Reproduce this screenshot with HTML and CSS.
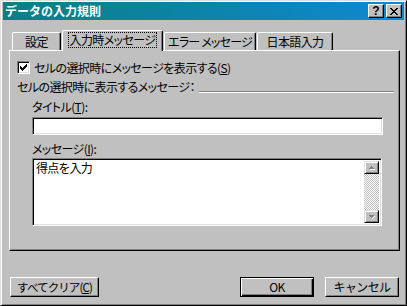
FILE: index.html
```html
<!DOCTYPE html>
<html lang="ja">
<head>
    <meta charset="UTF-8">
    <title>データの入力規則</title>
    <link rel="stylesheet" href="styles.css">
</head>
<body>
    <div class="window">
        <div class="titlebar">
            <span class="title">データの入力規則</span>
            <div class="title-buttons">
                <span class="tbtn help">?</span>
                <span class="tbtn close">
                    <svg width="8" height="7" viewBox="0 0 8 7"><path d="M0 0h2v1h1v1h2v-1h1v-1h2v1h-1v1h-1v1h-1v1h1v1h1v1h1v1h-2v-1h-1v-1h-2v1h-1v1h-2v-1h1v-1h1v-1h1v-1h-1v-1h-1v-1h-1z" fill="#000"/></svg>
                </span>
            </div>
        </div>

        <div class="content">
            <div class="tabs">
                <div class="tab tab-1">設定</div>
                <div class="tab tab-2 selected"><span class="focus">入力時メッセージ</span></div>
                <div class="tab tab-3">エラー&nbsp;メッセージ</div>
                <div class="tab tab-4">日本語入力</div>
            </div>

            <div class="panel">
                <div class="check-row">
                    <span class="checkbox">
                        <svg width="7" height="7" viewBox="0 0 7 7"><path d="M0 2h1v1h1v1h1v-1h1v-1h1v-1h1v-1h1v3h-1v1h-1v1h-1v1h-1v1h-1v-1h-1v-1h-1z" fill="#000"/></svg>
                    </span>
                    <span>セルの選択時にメッセージを表示する(<u>S</u>)</span>
                </div>

                <div class="group-head">
                    <span>セルの選択時に表示するメッセージ：</span>
                    <span class="etch"></span>
                </div>

                <div class="group-body">
                    <div class="label label-title">タイトル(<u>T</u>):</div>
                    <div class="field"></div>

                    <div class="label label-msg">メッセージ(<u>I</u>):</div>
                    <div class="memo">
                        <div class="memo-text">得点を入力</div>
                        <div class="scrollbar">
                            <span class="sbtn">
                                <svg width="6" height="4" viewBox="0 0 6 4"><path d="M2 0h1v1h1v1h1v1h-5v-1h1v-1h1z" fill="#808080"/><path d="M1 3h5v1h-5z" fill="#fff"/></svg>
                            </span>
                            <span class="track"></span>
                            <span class="sbtn">
                                <svg width="6" height="4" viewBox="0 0 6 4"><path d="M0 0h5v1h-1v1h-1v1h-1v-1h-1v-1h-1z" fill="#808080"/><path d="M5 1h1v1h-1zM4 2h1v1h-1zM3 3h1v1h-1z" fill="#fff"/></svg>
                            </span>
                        </div>
                    </div>
                </div>
            </div>

            <div class="buttons">
                <button class="btn btn-clear">すべてクリア(<u>C</u>)</button>
                <span class="spacer"></span>
                <button class="btn btn-ok">OK</button>
                <button class="btn btn-cancel">キャンセル</button>
            </div>
        </div>
    </div>
</body>
</html>
```

FILE: styles.css
```css
body {
    margin: 0;
    padding: 0;
    background-color: #c0c0c0;
    font-family: "Noto Sans CJK JP", "Noto Sans", sans-serif;
    font-size: 12px;
    font-feature-settings: "palt";
    letter-spacing: -0.6px;
    color: #000;
    white-space: nowrap;
}

u {
    text-decoration: underline;
    text-underline-offset: 1px;
}

.window {
    width: 407px;
    height: 306px;
    box-sizing: border-box;
    padding: 1px 2px;
    background-color: #c0c0c0;
    border: 1px solid;
    border-color: #dfdfdf #000 #000 #dfdfdf;
    box-shadow: inset 1px 1px #fff, inset -1px -1px #808080;
}

.titlebar {
    height: 18px;
    display: flex;
    align-items: center;
    justify-content: space-between;
    padding-left: 2px;
    background: linear-gradient(to right, #0a7f84, #1088d0);
}

.title {
    color: #fff;
    font-weight: bold;
    font-size: 12px;
    line-height: 18px;
    letter-spacing: 0;
    font-feature-settings: normal;
}

.title-buttons {
    display: flex;
    gap: 2px;
    margin-right: 2px;
}

.tbtn {
    width: 16px;
    height: 14px;
    box-sizing: border-box;
    display: flex;
    align-items: center;
    justify-content: center;
    background-color: #c0c0c0;
    border: 1px solid;
    border-color: #fff #000 #000 #fff;
    box-shadow: inset -1px -1px #808080;
}

.help {
    font-family: "Liberation Sans", sans-serif;
    font-weight: bold;
    font-size: 12px;
    line-height: 12px;
    letter-spacing: 0;
}

.content {
    padding: 10px 4px 0 6px;
}

.tabs {
    height: 20px;
    display: flex;
    align-items: flex-end;
    gap: 1px;
    padding-left: 3px;
}

.tab {
    height: 18px;
    box-sizing: border-box;
    display: flex;
    align-items: center;
    justify-content: center;
    background-color: #c0c0c0;
    border-top: 1px solid #fff;
    border-left: 1px solid #fff;
    border-right: 1px solid #000;
    border-top-left-radius: 2px;
    border-top-right-radius: 2px;
    box-shadow: inset -1px 0 #808080;
    line-height: 14px;
    padding-top: 1px;
}

.tab-1 { width: 49px; }
.tab-2 { width: 101px; }
.tab-3 { width: 92px; letter-spacing: -0.8px; }
.tab-4 { width: 76px; }

.tab.selected {
    height: 21px;
    margin-bottom: -1px;
    position: relative;
    z-index: 1;
    padding-top: 0;
    padding-bottom: 2px;
}

.focus {
    outline: 1px dotted #000;
    padding: 0 1px;
}

.panel {
    height: 201px;
    box-sizing: border-box;
    padding: 9px 5px 0 7px;
    border: 1px solid;
    border-color: #fff #000 #000 #fff;
    box-shadow: inset -1px -1px #808080;
}

.check-row {
    height: 15px;
    display: flex;
    align-items: center;
    gap: 4px;
    line-height: 15px;
}

.checkbox {
    width: 13px;
    height: 13px;
    box-sizing: border-box;
    display: flex;
    align-items: center;
    justify-content: center;
    background-color: #fff;
    border: 1px solid;
    border-color: #808080 #fff #fff #808080;
    box-shadow: inset 1px 1px #000, inset -1px -1px #dfdfdf;
}

.group-head {
    margin-top: 5px;
    height: 14px;
    display: flex;
    line-height: 14px;
    gap: 4px;
}

.etch {
    flex: 1;
    align-self: flex-end;
    margin-bottom: 1px;
    border-top: 1px solid #808080;
    border-bottom: 1px solid #fff;
}

.group-body {
    padding-left: 15px;
}

.label {
    line-height: 14px;
}

.label-title {
    margin-top: 6px;
}

.label-msg {
    margin-top: 7px;
}

.field {
    margin-top: 3px;
    width: 351px;
    height: 18px;
    box-sizing: border-box;
    background-color: #fff;
    border: 1px solid;
    border-color: #808080 #fff #fff #808080;
    box-shadow: inset 1px 1px #000, inset -1px -1px #dfdfdf;
}

.memo {
    margin-top: 2px;
    width: 350px;
    height: 68px;
    box-sizing: border-box;
    display: flex;
    background-color: #fff;
    border: 1px solid;
    border-color: #808080 #fff #fff #808080;
    box-shadow: inset 1px 1px #000, inset -1px -1px #dfdfdf;
    padding: 2px;
}

.memo-text {
    flex: 1;
    line-height: 13px;
    padding-left: 1px;
    letter-spacing: -0.8px;
    font-feature-settings: normal;
}

.scrollbar {
    width: 15px;
    display: flex;
    flex-direction: column;
}

.sbtn {
    height: 13px;
    box-sizing: border-box;
    display: flex;
    align-items: center;
    justify-content: center;
    background-color: #c0c0c0;
    border: 1px solid;
    border-color: #dfdfdf #000 #000 #dfdfdf;
    box-shadow: inset 1px 1px #fff, inset -1px -1px #808080;
}

.track {
    flex: 1;
    background-image: conic-gradient(#fff 25%, #c0c0c0 0 50%, #fff 0 75%, #c0c0c0 0);
    background-size: 2px 2px;
}

.buttons {
    margin-top: 26px;
    display: flex;
    align-items: center;
    gap: 11px;
    padding: 0 1px;
}

.spacer {
    flex: 1;
}

.btn {
    height: 20px;
    box-sizing: border-box;
    padding: 0;
    font-family: inherit;
    font-size: 12px;
    line-height: 14px;
    letter-spacing: inherit;
    white-space: nowrap;
    color: #000;
    background-color: #c0c0c0;
    border: 1px solid;
    border-color: #fff #000 #000 #fff;
    box-shadow: inset -1px -1px #808080;
    border-radius: 0;
}

.btn-clear {
    width: 89px;
    font-size: 11.5px;
    letter-spacing: -0.9px;
}

.btn-ok {
    width: 74px;
    border: 1px solid #000;
    box-shadow: inset 1px 1px #fff, inset -1px -1px #000, inset -2px -2px #808080;
}

.btn-cancel {
    width: 74px;
}
```
